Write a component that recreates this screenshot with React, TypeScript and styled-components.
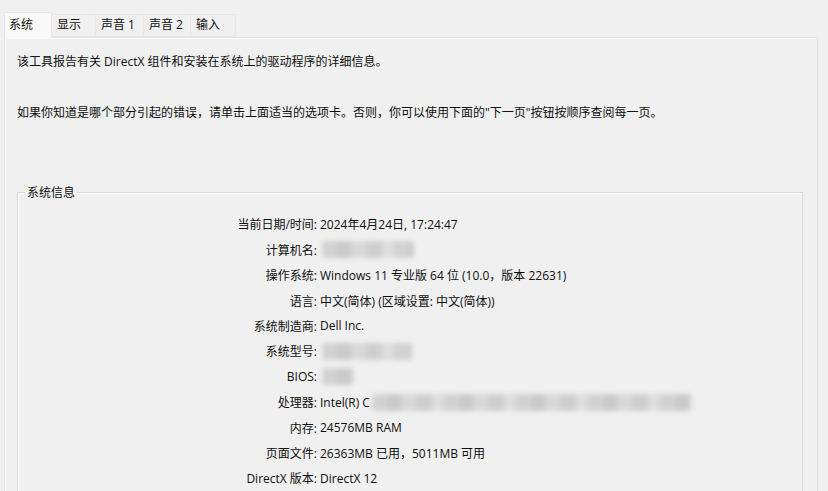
import styled, { createGlobalStyle } from "styled-components";

const GlobalStyle = createGlobalStyle`
  html, body {
    margin: 0;
    padding: 0;
    background: #f0f0f0;
  }
  body {
    font-family: "Open Sans", "Noto Sans CJK SC", sans-serif;
    font-size: 12px;
    color: #0e0e0e;
  }
`;

const tabs = [
  { text: "系统", width: 48 },
  { text: "显示", width: 45 },
  { text: "声音 1", width: 49 },
  { text: "声音 2", width: 48 },
  { text: "输入", width: 46 },
];

const rows: { label: string; value?: string; prefix?: string; blur?: number }[] = [
  { label: "当前日期/时间:", value: "2024年4月24日, 17:24:47" },
  { label: "计算机名:", blur: 92 },
  { label: "操作系统:", value: "Windows 11 专业版 64 位 (10.0，版本 22631)" },
  { label: "语言:", value: "中文(简体) (区域设置: 中文(简体))" },
  { label: "系统制造商:", value: "Dell Inc." },
  { label: "系统型号:", blur: 90 },
  { label: "BIOS:", blur: 32 },
  { label: "处理器:", prefix: "Intel(R) C", blur: 320 },
  { label: "内存:", value: "24576MB RAM" },
  { label: "页面文件:", value: "26363MB 已用，5011MB 可用" },
  { label: "DirectX 版本:", value: "DirectX 12" },
];

const App = () => {
  return (
    <Window>
      <GlobalStyle />
      <TabStrip>
        {tabs.map((t, i) => (
          <Tab key={t.text} selected={i === 0} style={{ width: t.width }}>
            {t.text}
          </Tab>
        ))}
      </TabStrip>
      <Panel>
        <Intro>该工具报告有关 DirectX 组件和安装在系统上的驱动程序的详细信息。</Intro>
        <Intro>
          如果你知道是哪个部分引起的错误，请单击上面适当的选项卡。否则，你可以使用下面的"下一页"按钮按顺序查阅每一页。
        </Intro>
        <GroupBox>
          <Legend>系统信息</Legend>
          <InfoGrid>
            {rows.map((r) => (
              <Row key={r.label}>
                <Label>{r.label}</Label>
                <Value>
                  {r.value}
                  {r.prefix}
                  {r.blur && <Redacted style={{ width: r.blur }} />}
                </Value>
              </Row>
            ))}
          </InfoGrid>
        </GroupBox>
      </Panel>
    </Window>
  );
};

const Window = styled.div`
  width: 828px;
  height: 491px;
  overflow: hidden;
  display: flex;
  flex-direction: column;
`;

const TabStrip = styled.div`
  height: 37px;
  padding-left: 4px;
  display: flex;
  align-items: flex-end;
  box-sizing: border-box;
`;

const Tab = styled.div<{ selected?: boolean }>`
  box-sizing: border-box;
  height: ${(p) => (p.selected ? 26 : 23)}px;
  padding: 0 0 0 ${(p) => (p.selected ? 4 : 5)}px;
  margin-bottom: ${(p) => (p.selected ? -1 : 0)}px;
  display: flex;
  align-items: center;
  background: ${(p) => (p.selected ? "#f9f9f9" : "#f0f0f0")};
  border: 1px solid #e6e6e6;
  border-bottom: ${(p) => (p.selected ? "none" : "1px solid #e6e6e6")};
  margin-right: -1px;
  position: relative;
  z-index: ${(p) => (p.selected ? 1 : 0)};
  line-height: 1;
  white-space: nowrap;
`;

const Panel = styled.div`
  flex: 1;
  margin: 0 10px 0 4px;
  border: 1px solid #e3e3e3;
  border-bottom: none;
  box-shadow: inset 1px 1px 0 #fbfbfb;
  padding: 16px 12px 0 12px;
  display: flex;
  flex-direction: column;
`;

const Intro = styled.p`
  margin: 0 0 35px 0;
  line-height: 16px;
  height: 16px;
  white-space: nowrap;
`;

const GroupBox = styled.fieldset`
  flex: 1;
  margin: 30px 2px 0 0;
  padding: 12px 0 0 0;
  border: 1px solid #dcdcdc;
  border-bottom: none;
  box-shadow: inset 1px 1px 0 #fafafa;
`;

const Legend = styled.legend`
  padding: 0 2px;
  margin-left: 7px;
  line-height: 14px;
`;

const InfoGrid = styled.div`
  display: flex;
  flex-direction: column;
`;

const Row = styled.div`
  display: grid;
  grid-template-columns: 299px 1fr;
  column-gap: 3px;
  height: 25.4px;
  align-items: center;
  white-space: nowrap;
`;

const Label = styled.span`
  text-align: right;
`;

const Value = styled.span`
  display: flex;
  align-items: center;
`;

const Redacted = styled.span`
  display: inline-block;
  height: 17px;
  margin-left: 2px;
  border-radius: 4px;
  background: repeating-linear-gradient(
    90deg,
    #cfcfcf 0 15px,
    #c6c6c6 15px 29px,
    #d6d6d6 29px 44px,
    #cbcbcb 44px 60px,
    #dcdcdc 60px 72px
  );
  filter: blur(2.5px);
  opacity: 0.9;
`;

export default App;
